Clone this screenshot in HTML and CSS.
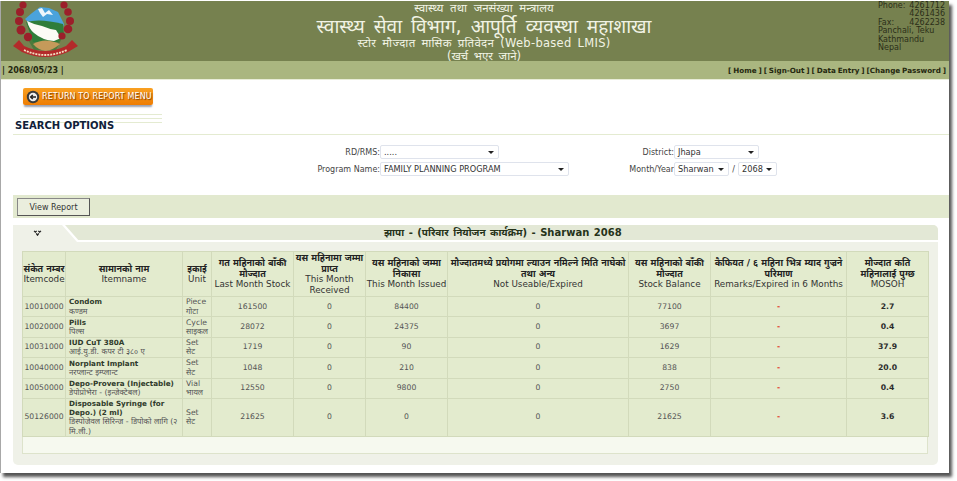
FILE: index.html
```html
<!DOCTYPE html>
<html lang="en">
<head>
  <meta charset="UTF-8" />
  <title>Store Monthly Report</title>
  <link rel="stylesheet" href="styles.css">
</head>
<body>
  <div class="window">
    <div class="header">
      <svg class="logo" viewBox="10 1 70 59" width="70" height="59">
        <path d="M27 38 L62 38 L56 50 L34 50Z" fill="#4d7a3c"/>
        <path d="M25 19 L32 13 L40 7 L49 8 L58 12 L64 24 L62 30 L30 24Z" fill="#4aa3dc"/>
        <path d="M38 9 L42 8 L45 13 L49 10 L53 15 L47 14 L43 17 L40 13Z" fill="#eef6fb"/>
        <path d="M26 22 Q40 18 63 24 L64 36 L58 42 L33 42Z" fill="#2f7d3a"/>
        <path d="M27 21 Q35 25 42 26 Q49 29 56 30 L61 38 L54 41 Q42 40 34 33 Q29 29 27 21Z" fill="#fbfbf6"/>
        <path d="M33 44 Q45 37 60 44 Q53 50 46 51 Q38 50 33 44Z" fill="#c59a5a"/>
        <g fill="#9c1f2a">
          <circle cx="23" cy="5" r="3.6"/><circle cx="20" cy="12" r="4"/><circle cx="19" cy="21" r="4"/><circle cx="21" cy="30" r="4.5"/><circle cx="28" cy="37" r="4.2"/>
          <circle cx="64" cy="5" r="3.6"/><circle cx="68" cy="12" r="3.8"/><circle cx="70" cy="21" r="4"/><circle cx="68" cy="29" r="4.3"/><circle cx="62" cy="36" r="3.6"/>
        </g>
        <path d="M13 46 L19 40 L24 46 Q45 56 66 46 L72 40 L78 46 L68 52 Q45 62 22 52Z" fill="#b32a2a"/>
        <path d="M24 50 Q45 60 67 50" stroke="#f1dfc0" stroke-width="1.8" stroke-dasharray="2 1" fill="none"/>
      </svg>
      <div class="titles">
        <div class="title-sm">स्वास्थ्य तथा जनसंख्या मन्त्रालय</div>
        <div class="title-lg">स्वास्थ्य सेवा विभाग, आपूर्ति व्यवस्था महाशाखा</div>
        <div class="title-md">स्टोर मौज्दात मासिक प्रतिवेदन (Web-based LMIS)</div>
        <div class="title-note">(खर्च भएर जाने)</div>
      </div>
      <div class="contact">
        <div class="contact-row"><span>Phone:</span><span>4261712</span></div>
        <div class="contact-row"><span></span><span>4261436</span></div>
        <div class="contact-row"><span>Fax:</span><span>4262238</span></div>
        <div>Panchali, Teku</div>
        <div>Kathmandu</div>
        <div>Nepal</div>
      </div>
    </div>
    <div class="subbar">
      <span>| 2068/05/23 |</span>
      <span class="subnav">[ Home ] [ Sign-Out ] [ Data Entry ] [Change Password ]</span>
    </div>

    <div class="return-wrap">
      <a class="return-btn" href="#">
        <span class="return-icon">
          <svg viewBox="0 0 14 14" width="14" height="14"><circle cx="7" cy="7" r="6.2" fill="#3a3a3a"/><circle cx="7" cy="7" r="4.2" fill="#eee"/><path d="M10 7H5M6.8 5L4.6 7l2.2 2" fill="none" stroke="#222" stroke-width="1.4"/></svg>
        </span>
        RETURN TO REPORT MENU
      </a>
    </div>

    <div class="search-head">
      <div class="search-lines"></div>
      <h2>SEARCH OPTIONS</h2>
    </div>

    <div class="filters">
      <div class="filter-col filter-left">
        <div class="filter-row">
          <label>RD/RMS:</label>
          <div class="select sel-rd"><span>.....</span><i></i></div>
        </div>
        <div class="filter-row">
          <label>Program Name:</label>
          <div class="select sel-prog"><span>FAMILY PLANNING PROGRAM</span><i></i></div>
        </div>
      </div>
      <div class="filter-col filter-right">
        <div class="filter-row">
          <label>District:</label>
          <div class="select sel-dist"><span>Jhapa</span><i></i></div>
        </div>
        <div class="filter-row">
          <label>Month/Year</label>
          <div class="select sel-month"><span>Sharwan</span><i></i></div>
          <span class="slash">/</span>
          <div class="select sel-year"><span>2068</span><i></i></div>
        </div>
      </div>
    </div>

    <div class="action-bar">
      <button class="view-btn">View Report</button>
    </div>

    <div class="panel">
      <div class="tabbar">
        <div class="tab">
          <svg viewBox="0 0 10 7" width="9" height="6"><path d="M1 1l1.5 1.5L4 1M6 1l1.5 1.5L9 1M3.5 4L5 6l1.5-2" fill="none" stroke="#222" stroke-width="1.5"/></svg>
        </div>
        <div class="tab-title">झापा - (परिवार नियोजन कार्यक्रम) - Sharwan 2068</div>
      </div>
      <table class="report">
        <thead>
          <tr>
            <th><b>संकेत नम्बर</b><br>Itemcode</th>
            <th><b>सामानको नाम</b><br>Itemname</th>
            <th><b>इकाई</b><br>Unit</th>
            <th><b>गत महिनाको बाँकी मौज्दात</b><br>Last Month Stock</th>
            <th><b>यस महिनामा जम्मा प्राप्त</b><br>This Month Received</th>
            <th><b>यस महिनाको जम्मा निकासा</b><br>This Month Issued</th>
            <th><b>मौज्दातमध्ये प्रयोगमा ल्याउन नमिल्ने मिति नाघेको तथा अन्य</b><br>Not Useable/Expired</th>
            <th><b>यस महिनाको बाँकी मौज्दात</b><br>Stock Balance</th>
            <th><b>कैफियत / ६ महिना भित्र म्याद गुज्रने परिमाण</b><br>Remarks/Expired in 6 Months</th>
            <th><b>मौज्दात कति महिनालाई पुग्छ</b><br>MOSOH</th>
          </tr>
        </thead>
        <tbody>
          <tr class="row-a">
            <td>10010000</td><td class="name"><b>Condom</b><br>कण्डम</td><td class="unit">Piece<br>गोटा</td>
            <td>161500</td><td>0</td><td>84400</td><td>0</td><td>77100</td><td class="dash">-</td><td class="mosoh">2.7</td>
          </tr>
          <tr class="row-a">
            <td>10020000</td><td class="name"><b>Pills</b><br>पिल्स</td><td class="unit">Cycle<br>साइकल</td>
            <td>28072</td><td>0</td><td>24375</td><td>0</td><td>3697</td><td class="dash">-</td><td class="mosoh">0.4</td>
          </tr>
          <tr class="row-a">
            <td>10031000</td><td class="name"><b>IUD CuT 380A</b><br>आई.यु.डी. कपर टी ३८० ए</td><td class="unit">Set<br>सेट</td>
            <td>1719</td><td>0</td><td>90</td><td>0</td><td>1629</td><td class="dash">-</td><td class="mosoh">37.9</td>
          </tr>
          <tr class="row-a">
            <td>10040000</td><td class="name"><b>Norplant Implant</b><br>नरप्लान्ट इम्प्लान्ट</td><td class="unit">Set<br>सेट</td>
            <td>1048</td><td>0</td><td>210</td><td>0</td><td>838</td><td class="dash">-</td><td class="mosoh">20.0</td>
          </tr>
          <tr class="row-a">
            <td>10050000</td><td class="name"><b>Depo-Provera (Injectable)</b><br>डेपोप्रोभेरा - (इन्जेक्टेबल)</td><td class="unit">Vial<br>भायल</td>
            <td>12550</td><td>0</td><td>9800</td><td>0</td><td>2750</td><td class="dash">-</td><td class="mosoh">0.4</td>
          </tr>
          <tr class="row-b">
            <td>50126000</td><td class="name"><b>Disposable Syringe (for Depo.) (2 ml)</b><br>डिस्पोजेवल सिरिन्ज - डिपोको लागि (२ मि.ली.)</td><td class="unit">Set<br>सेट</td>
            <td>21625</td><td>0</td><td>0</td><td>0</td><td>21625</td><td class="dash">-</td><td class="mosoh">3.6</td>
          </tr>
        </tbody>
      </table>
      <div class="table-foot"></div>
    </div>
  </div>
</body>
</html>
```

FILE: styles.css
```css
* {
  box-sizing: border-box;
}

body {
  margin: 0;
  height: 481px;
  overflow: hidden;
  background: #fff;
  font-family: "DejaVu Sans", "Noto Sans", sans-serif;
  color: #333;
}

/* outer window with the screenshot shadow */
.window {
  width: 949px;
  height: 472px;
  margin-top: 1px;
  background: #fff;
  border-left: 1px solid #a8a8a8;
  box-shadow: 3px 4px 3px #555;
}

/* Header */
.header {
  height: 60px;
  background: #76814f;
  display: flex;
}

.logo {
  flex: none;
  margin-left: 9px;
}

.titles {
  flex: 1;
  padding-left: 204px;
  color: #f1f3e4;
}

.titles > div {
  width: 400px;
  text-align: center;
  white-space: nowrap;
}

.title-sm {
  font-size: 11.5px;
  word-spacing: 3px;
  line-height: 15px;
  height: 15px;
}

.title-lg {
  font-size: 19px;
  word-spacing: 3px;
  line-height: 21px;
  height: 21px;
}

.title-md {
  font-size: 11.5px;
  word-spacing: 2px;
  letter-spacing: 0.3px;
  line-height: 13px;
  height: 13px;
}

.title-note {
  font-size: 11.5px;
  word-spacing: 2px;
  line-height: 13px;
  height: 11px;
}

.contact {
  flex: none;
  width: 71px;
  padding: 1px 4px 0 0;
  font-size: 8px;
  line-height: 8.4px;
  color: #2b2e18;
  white-space: nowrap;
}

.contact-row {
  display: flex;
  justify-content: space-between;
}

.subbar {
  height: 19px;
  background: #aab680;
  border-bottom: 1px solid #e8ecd8;
  display: flex;
  justify-content: space-between;
  align-items: center;
  padding: 0 3px 0 1px;
  font-size: 8px;
  font-weight: bold;
  color: #25280f;
  white-space: nowrap;
}

.subnav {
  font-size: 7.2px;
  word-spacing: -0.6px;
}

/* Return button */
.return-wrap {
  padding: 8px 0 0 22px;
  height: 34px;
}

.return-btn {
  display: flex;
  align-items: center;
  gap: 2px;
  width: 130px;
  height: 17px;
  padding-left: 3px;
  background: linear-gradient(#f9a021, #ee7d03);
  border-radius: 2px;
  box-shadow: 0 3px 2px -1px #9aa0b0;
  color: #fff;
  font-size: 8px;
  letter-spacing: 0.13px;
  text-decoration: none;
  white-space: nowrap;
  text-shadow: 1px 1px 1px #7a3c00;
}

.return-icon {
  display: flex;
}

/* Search heading */
.search-head {
  position: relative;
  height: 21px;
  margin-left: 12px;
  border-bottom: 1px solid #e4ebd1;
}

.search-lines {
  position: absolute;
  left: 7px;
  top: 0;
  width: 142px;
  height: 9px;
  border-top: 1px solid #e4ebd1;
  border-bottom: 1px solid #e4ebd1;
  background: linear-gradient(#e4ebd1, #e4ebd1) 0 3px / 100% 1px no-repeat;
}

.search-head h2 {
  position: relative;
  margin: 0;
  padding: 6px 0 0 2px;
  font-size: 10px;
  line-height: 12px;
  color: #10203a;
}

/* Filters */
.filters {
  display: flex;
  padding-top: 10px;
  height: 60px;
}

.filter-col {
  display: flex;
  flex-direction: column;
  gap: 3px;
}

.filter-left {
  width: 569px;
  padding-left: 298px;
}

.filter-right {
  padding-left: 52px;
}

.filter-row {
  display: flex;
  align-items: center;
  height: 14px;
  font-size: 8px;
  color: #444;
}

.filter-left label {
  width: 81px;
  text-align: right;
}

.filter-right label {
  width: 52px;
  text-align: right;
}

.select {
  display: flex;
  align-items: center;
  justify-content: space-between;
  height: 14px;
  padding: 0 4px 0 3px;
  background: #fff;
  border: 1px solid #dfe3ec;
  border-radius: 2px;
  font-size: 8.2px;
  color: #333;
  white-space: nowrap;
}

.select i {
  width: 0;
  height: 0;
  border-left: 3px solid transparent;
  border-right: 3px solid transparent;
  border-top: 3px solid #222;
}

.sel-rd {
  width: 119px;
}

.sel-prog {
  width: 189px;
}

.sel-dist {
  width: 85px;
}

.sel-month {
  width: 55px;
}

.sel-year {
  width: 39px;
}

.slash {
  width: 9px;
  text-align: center;
}

/* View report bar */
.action-bar {
  height: 23px;
  margin-left: 12px;
  padding: 3px 0 0 4px;
  background: #e2e9cf;
}

.view-btn {
  display: block;
  width: 73px;
  height: 18px;
  padding: 0;
  background: #eaeedd;
  border: 1px solid;
  border-color: #888 #555 #555 #888;
  font-family: inherit;
  font-size: 8px;
  color: #333;
}

/* Panel */
.panel {
  width: 925px;
  height: 240px;
  margin: 7px 0 0 12px;
  padding: 0 9px;
  background: #eff1e8;
  border-radius: 5px;
}

.tabbar {
  position: relative;
  height: 17px;
  margin: 0 -9px 9px;
  background: #e3e8d6;
  border-radius: 5px 5px 0 0;
  border-bottom: 2px solid #fff;
}

.tab {
  position: absolute;
  left: 0;
  top: 0;
  width: 67px;
  height: 17px;
  background: #fff;
  clip-path: polygon(0 0, 52px 0, 67px 100%, 0 100%);
  border-radius: 5px 0 0 0;
}

.tab::before {
  content: "";
  position: absolute;
  inset: 0;
  background: #eff1e8;
  clip-path: polygon(0 0, 49px 0, 64px 100%, 0 100%);
}

.tab svg {
  position: absolute;
  left: 20px;
  top: 5px;
  display: block;
}

.tab-title {
  position: absolute;
  left: 371px;
  top: 0;
  font-size: 10px;
  font-weight: bold;
  word-spacing: 1px;
  line-height: 15px;
  color: #26331a;
  white-space: nowrap;
}

.report {
  width: 906px;
  table-layout: fixed;
  border-collapse: collapse;
  background: #e3ebce;
  color: #555;
}

.report th,
.report td {
  border: 1px solid #d2dabb;
  padding: 0;
  text-align: center;
  font-size: 7.7px;
  line-height: 10px;
  overflow: hidden;
}

.report th {
  height: 45px;
  font-weight: normal;
  font-size: 8.8px;
  line-height: 10.5px;
  color: #333;
}

.report th b {
  font-size: 9px;
  color: #222;
}

.report th:nth-child(1) { width: 43px; }
.report th:nth-child(2) { width: 117px; }
.report th:nth-child(3) { width: 29px; }
.report th:nth-child(4) { width: 82px; }
.report th:nth-child(5) { width: 72px; }
.report th:nth-child(6) { width: 82px; }
.report th:nth-child(7) { width: 181px; }
.report th:nth-child(8) { width: 82px; }
.report th:nth-child(9) { width: 136px; }
.report th:nth-child(10) { width: 82px; }

.row-a td {
  height: 20.4px;
}

.row-b td {
  height: 38px;
}

.report td.name,
.report td.unit {
  text-align: left;
  padding-left: 3px;
}

.report td.name {
  font-size: 7.8px;
  line-height: 9.2px;
}

.report td.name b {
  font-size: 7.2px;
  color: #2f3a2a;
}

.report td.unit {
  line-height: 9.5px;
}

.report td.dash {
  color: #e2402c;
  font-weight: bold;
}

.report td.mosoh {
  font-weight: bold;
  color: #2b2b2b;
}

.table-foot {
  width: 906px;
  height: 17px;
  background: #f6f9ef;
  border: 1px solid #dde3cb;
  border-top: 0;
}
```
